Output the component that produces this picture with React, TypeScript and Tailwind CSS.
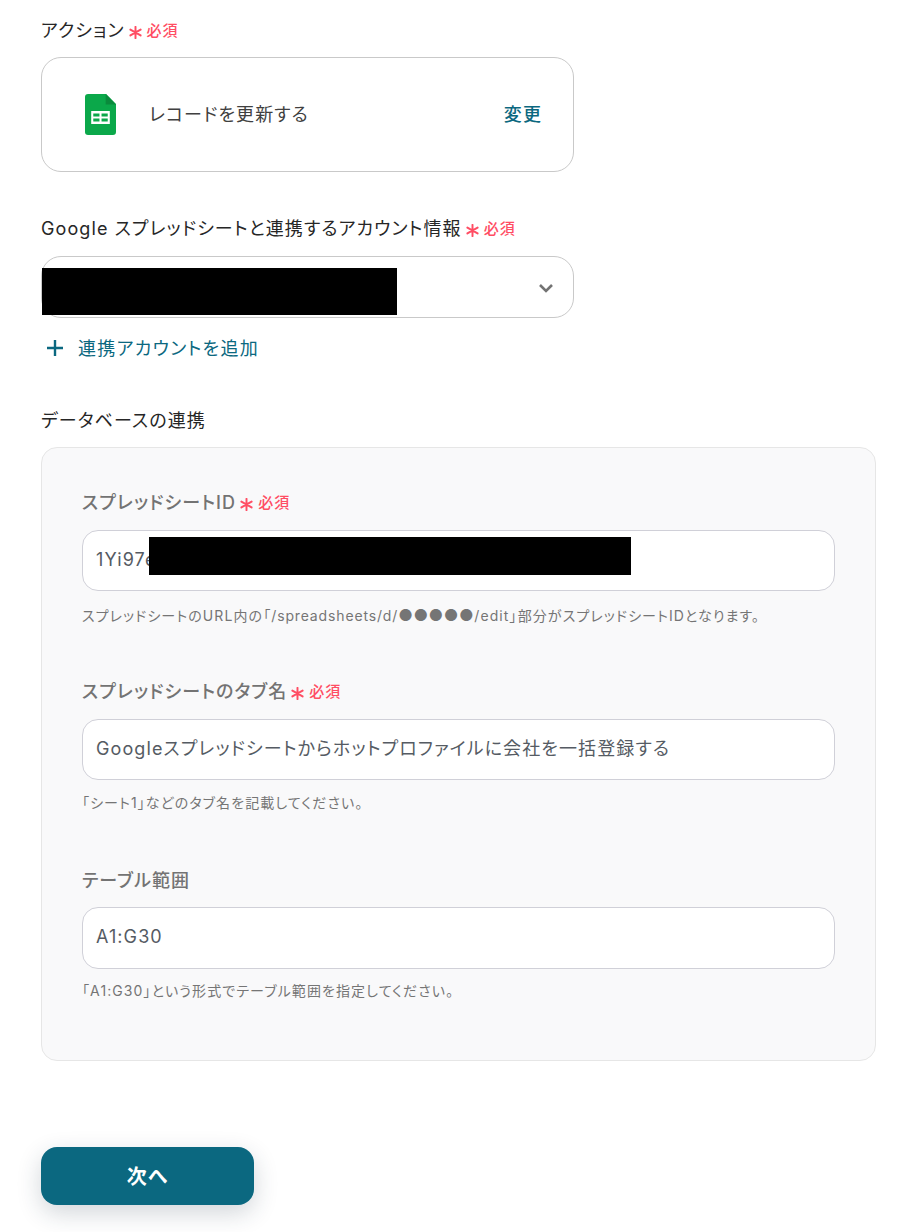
import React from "react";

const font = { fontFamily: '"Inter", "Noto Sans CJK JP", sans-serif' };

function Required() {
  return (
    <span className="ml-[4px] inline-flex items-center text-[15px] font-medium tracking-[1px] text-[#ff4d63]">
      <svg width="13" height="13" viewBox="0 0 12 12" className="mr-[5px] mt-[3px]" fill="none" stroke="#ff4d63" strokeWidth="1.800" strokeLinecap="round">
        <path d="M6 .8v10.4M1.3 3.3l9.4 5.4M10.7 3.3l-9.4 5.4" />
      </svg>
      必須
    </span>
  );
}

function SheetsIcon() {
  return (
    <svg width="31" height="41" viewBox="0 0 30 41" preserveAspectRatio="none">
      <path d="M3 0h17.5L30 10v28a3 3 0 0 1-3 3H3a3 3 0 0 1-3-3V3a3 3 0 0 1 3-3z" fill="#0ba84a" />
      <path d="M20 0l10 10.500H20z" fill="#0a8a3c" />
      <path d="M6 17h18v13H6z" fill="#fff" />
      <path d="M8 19.500h6v3H8zM16 19.500h6v3h-6zM8 24.500h6v3H8zM16 24.500h6v3h-6z" fill="#0ba84a" />
    </svg>
  );
}

function Field(props: {
  label: string;
  required?: boolean;
  value: string;
  help: React.ReactNode;
  redact?: boolean;
  className?: string;
  inputClass?: string;
  helpClass?: string;
}) {
  return (
    <div className={props.className}>
      <div className="flex h-[24px] items-center text-[18px] font-medium leading-[24px] text-[#737373]">
        {props.label}
        {props.required && <Required />}
      </div>
      <div className={"relative flex items-center rounded-[16px] border border-[#d0d0d8] bg-white px-[13px] pb-[3px] text-[18px] text-[#555b63] " + (props.inputClass || "mt-[15px] h-[61px]")}>
        {props.value}
        {props.redact && <div className="absolute left-[66px] top-[6px] h-[38px] w-[482px] bg-black" />}
      </div>
      <p className={"h-[20px] text-[14px] leading-[20px] text-[#757575] " + (props.helpClass || "mt-[14px]")}>{props.help}</p>
    </div>
  );
}

export default function App() {
  return (
    <div style={font} className="h-[1232px] overflow-hidden bg-white pl-[41px] pt-[19px] tracking-[1.1px] text-[#262626] [font-feature-settings:'palt']">
      <div className="flex h-[24px] items-center text-[18px] font-normal leading-[24px]">
        アクション
        <Required />
      </div>
      <div className="mt-[14px] flex h-[115px] w-[533px] items-center rounded-[20px] border border-[#c9c9c9] pl-[43px] pr-[31px]">
        <SheetsIcon />
        <span className="ml-[33px] text-[18px] text-[#404040]">レコードを更新する</span>
        <span className="ml-auto text-[18px] font-medium text-[#0b6880]">変更</span>
      </div>

      <div className="mt-[45px] flex h-[24px] items-center text-[18px] font-normal leading-[24px]">
        Google スプレッドシートと連携するアカウント情報
        <Required />
      </div>
      <div className="relative mt-[15px] flex h-[62px] w-[533px] items-center justify-end rounded-[20px] border border-[#c9c9c9] pr-[19px]">
        <div className="absolute left-0 top-[11px] h-[47px] w-[355px] bg-black" />
        <svg width="16" height="16" viewBox="0 0 16 16" className="mt-[2px]" fill="none" stroke="#737373" strokeWidth="2.600">
          <path d="M2 5l6 6 6-6" />
        </svg>
      </div>
      <div className="mt-[18px] flex h-[24px] items-center text-[18px] font-normal tracking-[1.3px] text-[#0b6880]">
        <svg width="18" height="18" viewBox="0 0 18 18" className="ml-[5px] mr-[14px]" stroke="#0b6880" strokeWidth="2.400" fill="none">
          <path d="M9 1v16M1 9h16" />
        </svg>
        連携アカウントを追加
      </div>

      <div className="mt-[49px] flex h-[24px] items-center text-[18px] font-normal leading-[24px]">データベースの連携</div>
      <div className="mt-[14px] h-[614px] w-[835px] rounded-[16px] border border-[#e6e6e6] bg-[#f9f9fa] px-[40px] pt-[43px]">
        <Field
          label="スプレッドシートID"
          required
          redact
          value="1Yi97e"
          help={
            <>
              スプレッドシートのURL内の「<span className="tracking-[0.85px]">/spreadsheets/d/</span>
              <span className="text-[16px] tracking-[0.6px]">●●●●●</span>/edit」部分がスプレッドシートIDとなります。
            </>
          }
        />
        <Field
          className="mt-[55px]"
          helpClass="mt-[13px]"
          label="スプレッドシートのタブ名"
          required
          value="Googleスプレッドシートからホットプロファイルに会社を一括登録する"
          help="「シート1」などのタブ名を記載してください。"
        />
        <Field
          className="mt-[56px]"
          inputClass="mt-[14px] h-[62px]"
          helpClass="mt-[12px]"
          label="テーブル範囲"
          value="A1:G30"
          help="「A1:G30」という形式でテーブル範囲を指定してください。"
        />
      </div>

      <button className="mt-[86px] flex h-[58px] w-[213px] items-center justify-center rounded-[16px] bg-[#0b6880] pt-[1px] text-[20px] font-bold text-white shadow-[0_8px_24px_rgba(30,50,70,0.2)]">
        次へ
      </button>
    </div>
  );
}
